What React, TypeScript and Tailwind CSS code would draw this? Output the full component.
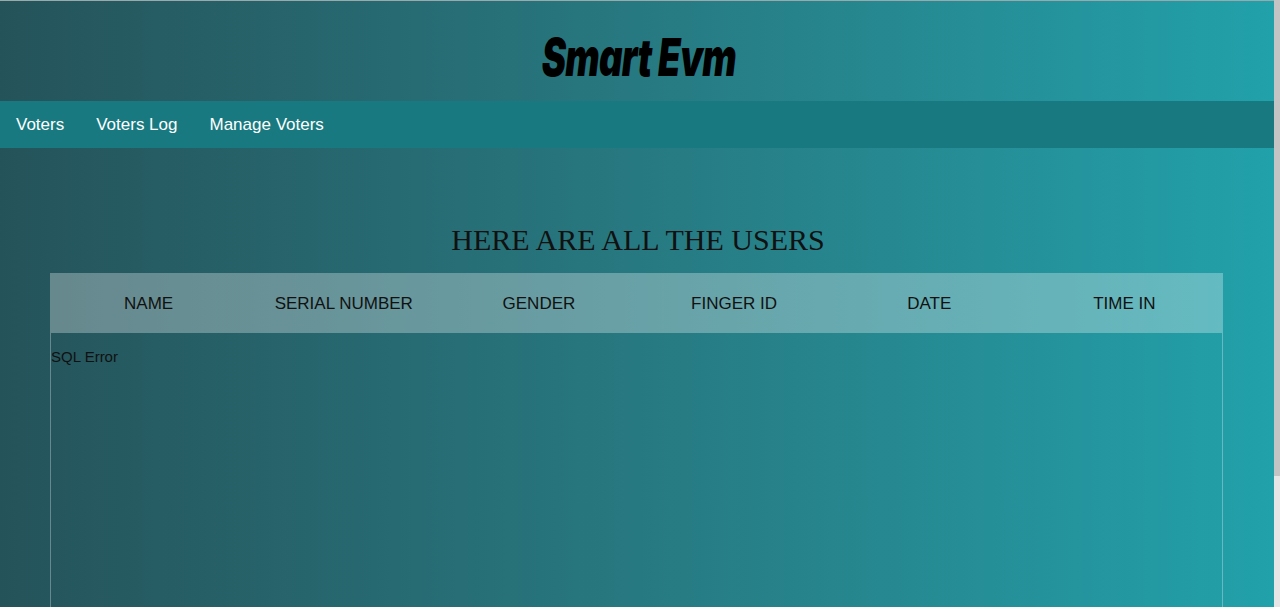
import React from "react";

export default function App() {
  const cols = ["NAME", "SERIAL NUMBER", "GENDER", "FINGER ID", "DATE", "TIME IN"];
  return (
    <div className="flex h-[607px] w-[1280px] overflow-hidden">
      <div
        className="flex-1 h-full bg-gradient-to-r from-[#25535a] to-[#21a1aa] border-t border-[#9aa9ab]"
        style={{ fontFamily: '"Liberation Sans", Arial, sans-serif' }}
      >
        <header className="h-[100px] flex items-center justify-center">
          <h1
            className="text-[52px] font-black italic text-black tracking-[-1px] leading-none mt-[14px] pl-[6px]"
            style={{ fontFamily: 'Inter, "Liberation Sans", sans-serif', transform: "scaleX(0.70)" }}
          >
            Smart Evm
          </h1>
        </header>
        <nav className="h-[47px] bg-[#187a80] flex items-center text-[17px] text-white pt-[1px]">
          <a className="px-4">Voters</a>
          <a className="px-4">Voters Log</a>
          <a className="px-4">Manage Voters</a>
        </nav>
        <div className="pt-[77px] px-[50px]">
          <h2
            className="text-center text-[30px] text-[#111] leading-none mb-[18px] pl-[2px]"
            style={{ fontFamily: '"Liberation Serif", "Times New Roman", serif' }}
          >
            HERE ARE ALL THE USERS
          </h2>
          <div className="w-[1173px] border-x border-white/30">
            <div className="grid grid-cols-6 h-[60px] items-center bg-white/30 text-[17px] text-[#111] pt-[1px]">
              {cols.map((c) => (
                <div key={c} className="text-center">{c}</div>
              ))}
            </div>
            <div className="h-[400px] pt-[13px] text-[15px] text-[#111]">SQL Error</div>
          </div>
        </div>
      </div>
      <div className="w-[6px] h-full bg-[#e6e6e6] flex flex-col">
        <div className="h-[476px] bg-[#c4c4c4]" />
      </div>
    </div>
  );
}
